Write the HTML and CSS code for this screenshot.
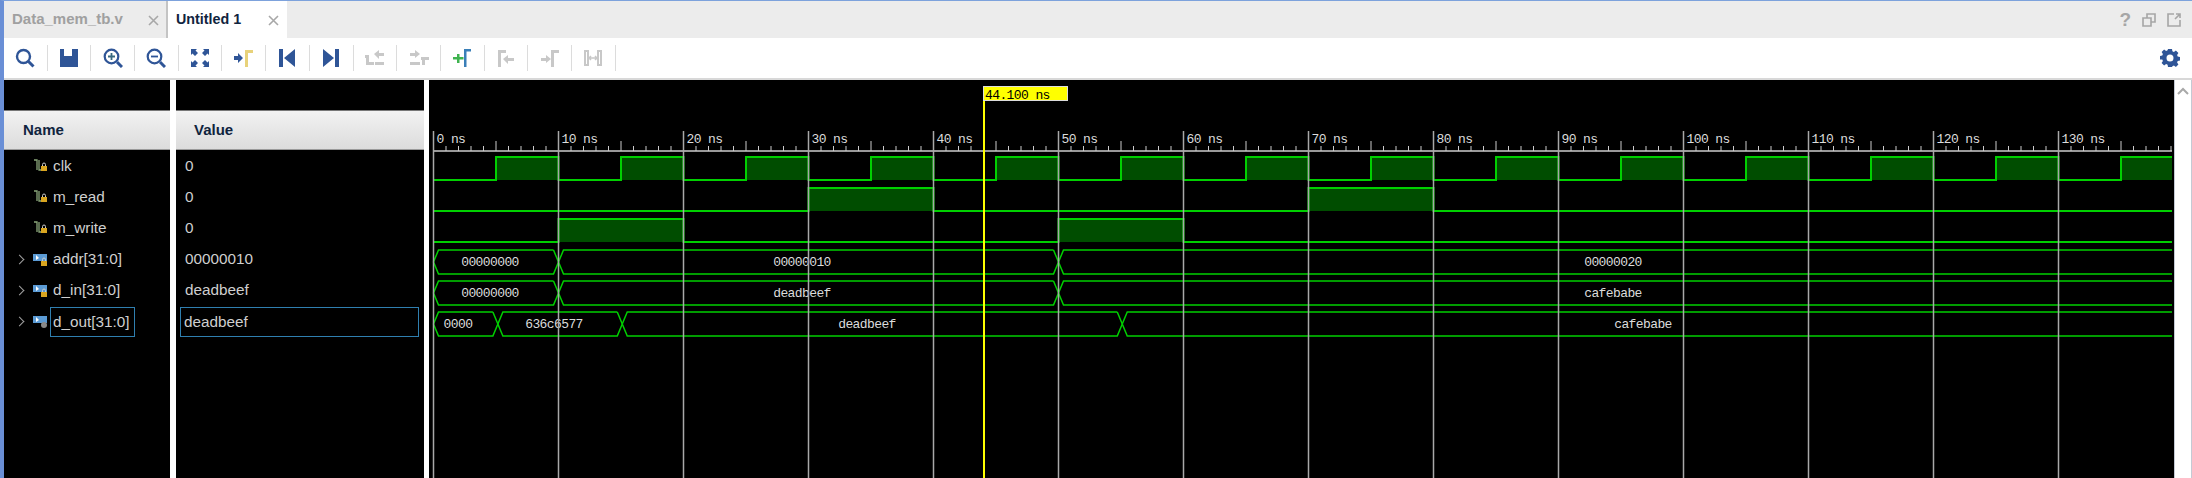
FILE: index.html
```html
<!DOCTYPE html>
<html lang="en">
<head>
    <meta charset="UTF-8">
    <title>Untitled 1</title>
    <link rel="stylesheet" href="styles.css">
</head>
<body>
    <div class="window">
        <div class="tabbar">
            <div class="tab">
                <span class="tab-name">Data_mem_tb.v</span>
                <svg class="tab-close" width="11" height="11" viewBox="0 0 11 11"><path d="M1 1l9 9M10 1l-9 9"/></svg>
            </div>
            <div class="tab tab-active">
                <span class="tab-name">Untitled 1</span>
                <svg class="tab-close" width="11" height="11" viewBox="0 0 11 11"><path d="M1 1l9 9M10 1l-9 9"/></svg>
            </div>
            <div class="tab-actions">
                <span class="help">?</span>
                <svg width="14" height="14" viewBox="0 0 14 14" fill="none" stroke="#a6a6a6" stroke-width="1.6"><path d="M1 5h8v8H1zM5 5V1h8v8H9"/></svg>
                <svg width="14" height="14" viewBox="0 0 14 14" fill="none" stroke="#a6a6a6" stroke-width="1.6"><path d="M7 1H1v12h12V7M8 6l5-5M9 1h4v4"/></svg>
            </div>
        </div>

        <div class="toolbar">
            <button class="tool"><svg width="20" height="20" viewBox="0 0 20 20" fill="none" stroke="#2f5597" stroke-width="2.4"><circle cx="8.5" cy="8.5" r="6.5"/><path d="M13.5 13.5l5 5" stroke-width="3"/></svg></button>
            <button class="tool"><svg width="20" height="20" viewBox="0 0 20 20"><path fill="#2f5597" fill-rule="evenodd" d="M1 1h18v18H1zM5 1v7h8V1z"/><path fill="#2f5597" d="M15 1h4v6h-4z"/></svg></button>
            <button class="tool"><svg width="20" height="20" viewBox="0 0 20 20" fill="none" stroke="#2f5597" stroke-width="2.2"><circle cx="8.5" cy="8.5" r="6.8"/><path d="M14 14l5 5" stroke-width="3"/><path d="M5 8.5h7M8.5 5v7" stroke="#3a6a80" stroke-width="1.8"/></svg></button>
            <button class="tool"><svg width="20" height="20" viewBox="0 0 20 20" fill="none" stroke="#2f5597" stroke-width="2.2"><circle cx="8.5" cy="8.5" r="6.8"/><path d="M14 14l5 5" stroke-width="3"/><path d="M5 8.5h7" stroke-width="1.8"/></svg></button>
            <button class="tool"><svg width="20" height="20" viewBox="0 0 20 20" fill="#2f5597"><path d="M1 1h6L5.5 2.5 8 5 5 8 2.5 5.5 1 7zM19 1v6l-1.5-1.5L15 8l-3-3 2.5-2.5L13 1zM1 19v-6l1.5 1.5L5 12l3 3-2.5 2.5L7 19zM19 19h-6l1.5-1.5L12 15l3-3 2.5 2.5L19 13z"/></svg></button>
            <button class="tool"><svg width="20" height="20" viewBox="0 0 20 20"><path fill="#2f5597" d="M0 8h4V5l5 5-5 5v-3H0z"/><path fill="#e8d27a" d="M11 2h8v3h-5v14h-3z"/></svg></button>
            <button class="tool"><svg width="20" height="20" viewBox="0 0 20 20" fill="#2f5597"><path d="M2 1h4v18H2zM18 1v18L7 10z"/></svg></button>
            <button class="tool"><svg width="20" height="20" viewBox="0 0 20 20" fill="#2f5597"><path d="M14 1h4v18h-4zM2 1v18l11-9z"/></svg></button>
            <button class="tool"><svg width="20" height="20" viewBox="0 0 20 20" fill="#c8c8c8"><path d="M0 7h4v7h5v3H1v-7H0zM9 6l5-4v3h5v3h-5v3zM10 14h9v3h-9z"/></svg></button>
            <button class="tool"><svg width="20" height="20" viewBox="0 0 20 20" fill="#c8c8c8"><path d="M1 5h5V2l5 4-5 4V8H1zM1 14h10v3H1zM12 9h8v3h-4v5h-3v-5h-1z"/></svg></button>
            <button class="tool"><svg width="20" height="20" viewBox="0 0 20 20"><path fill="#3fb34f" d="M1 9h4V6h2.500v3h4v2.500h-4v3.500H5v-3.500H1z"/><path fill="#3a7fb8" d="M12 1h7v2.500h-4.500V19H12z"/></svg></button>
            <button class="tool"><svg width="20" height="20" viewBox="0 0 20 20" fill="#c8c8c8"><path d="M2 2h8v3H5v14H2zM7 11l5-4v3h6v3h-6v3z"/></svg></button>
            <button class="tool"><svg width="20" height="20" viewBox="0 0 20 20" fill="#c8c8c8"><path d="M11 2h8v3h-5v14h-3zM1 10h5V7l5 4-5 4v-2H1z"/></svg></button>
            <button class="tool"><svg width="20" height="20" viewBox="0 0 20 20" fill="none" stroke="#c8c8c8"><path stroke-width="2" d="M2 3h3v14H2zM15 3h3v14h-3z"/><path stroke-width="1.5" d="M6 10h8M6 10l2-2M6 10l2 2M14 10l-2-2M14 10l-2 2"/></svg></button>
            <svg class="gear" width="18" height="18" viewBox="0 0 18 18"><path fill="#2f5597" fill-rule="evenodd" d="M7 0h4l.4 2.3 1.500.6L14.900 1.600l2.500 2.500-1.300 2 .6 1.500 2.300.4v3.500l-2.300.4-.6 1.500 1.300 2-2.500 2.500-2-1.300-1.500.6L11 18H7l-.4-2.300-1.500-.6-2 1.300-2.500-2.500 1.300-2-.6-1.500L-1 10.500V7l2.300-.4.6-1.500-1.300-2 2.500-2.500 2 1.300 1.500-.6zM9 5.500a3.500 3.500 0 1 0 0 7 3.500 3.500 0 0 0 0-7z"/></svg>
        </div>

        <div class="viewer">
            <div class="names">
                <div class="pane-top"></div>
                <div class="col-head col-head-name">Name</div>
                <div class="signal"><svg class="sig-icon" width="15" height="15" viewBox="0 0 15 15"><use href="#icon-bit"/></svg>clk</div>
                <div class="signal"><svg class="sig-icon" width="15" height="15" viewBox="0 0 15 15"><use href="#icon-bit"/></svg>m_read</div>
                <div class="signal"><svg class="sig-icon" width="15" height="15" viewBox="0 0 15 15"><use href="#icon-bit"/></svg>m_write</div>
                <div class="signal"><span class="chev"></span><svg class="sig-icon" width="15" height="15" viewBox="0 0 15 15"><use href="#icon-bus"/></svg>addr[31:0]</div>
                <div class="signal"><span class="chev"></span><svg class="sig-icon" width="15" height="15" viewBox="0 0 15 15"><use href="#icon-bus"/></svg>d_in[31:0]</div>
                <div class="signal"><span class="chev"></span><svg class="sig-icon" width="15" height="15" viewBox="0 0 15 15"><use href="#icon-bus-out"/></svg><span class="picked">d_out[31:0]</span></div>
            </div>
            <div class="values">
                <div class="pane-top"></div>
                <div class="col-head col-head-value">Value</div>
                <div class="value">0</div>
                <div class="value">0</div>
                <div class="value">0</div>
                <div class="value">00000010</div>
                <div class="value">deadbeef</div>
                <div class="value"><span class="picked picked-wide">deadbeef</span></div>
            </div>
            <div class="wave-pane">
                <svg id="wave" class="wave" width="1745" height="398"></svg>
            </div>
            <div class="scrollbar">
                <svg width="12" height="8" viewBox="0 0 12 8" fill="none" stroke="#a8a8a8" stroke-width="2"><path d="M1 7l5-5 5 5"/></svg>
            </div>
        </div>
    </div>

    <svg class="defs" width="0" height="0">
        <defs>
            <g id="icon-bit">
                <path d="M1 2h3v10M6 2v10h2" fill="none" stroke="#8aa67a" stroke-width="1.3"/>
                <rect x="8" y="8" width="6" height="5" fill="#d9a520"/>
                <path d="M9.5 8V6.500a1.500 1.500 0 0 1 3 0V8" fill="none" stroke="#cccccc"/>
            </g>
            <g id="icon-bus">
                <path d="M0 2h14v7H0z" fill="#5b9bd5"/>
                <path d="M3 3l3 3-3 2z" fill="#ffffff"/>
                <rect x="8" y="9" width="6" height="5" fill="#d9a520"/>
                <path d="M9.5 9V7.500a1.500 1.500 0 0 1 3 0V9" fill="none" stroke="#cccccc"/>
            </g>
            <g id="icon-bus-out">
                <path d="M0 2h14v7H0z" fill="#5b9bd5"/>
                <path d="M3 3l3 3-3 2z" fill="#ffffff"/>
                <circle cx="11" cy="11" r="3" fill="#8a8a8a"/>
            </g>
        </defs>
    </svg>

    <script src="wave.js"></script>
</body>
</html>
```

FILE: styles.css
```css
html, body {
    margin: 0;
    padding: 0;
    background-color: #ffffff;
    overflow: hidden;
}

body {
    font-family: "Liberation Sans", Arial, sans-serif;
    font-size: 15.3px;
}

.defs {
    position: absolute;
}

.window {
    height: 477px;
    border-top: 1px solid #7da2dc;
    border-left: 4px solid #6a8fd6;
    display: flex;
    flex-direction: column;
}

/* tabs */
.tabbar {
    display: flex;
    height: 37px;
    background-color: #ececec;
}

.tab {
    display: flex;
    align-items: center;
    justify-content: space-between;
    box-sizing: border-box;
    width: 164px;
    padding: 0 7px 2px 8px;
    border-right: 2px solid #c4c4c4;
    color: #a0a0a0;
    font-weight: bold;
    font-size: 15px;
}

.tab-active {
    width: 119px;
    background-color: #ffffff;
    border-right: none;
    color: #10243e;
    font-size: 14.3px;
    padding: 0 8px 2px 8px;
}

.tab-close {
    fill: none;
    stroke: #a8a8a8;
    stroke-width: 1.6;
    margin-top: 4px;
}

.tab-actions {
    margin-left: auto;
    display: flex;
    align-items: center;
    gap: 11px;
    padding: 0 11px 0 0;
}

.help {
    color: #a6a6a6;
    font-weight: bold;
    font-size: 19px;
}

/* toolbar */
.toolbar {
    display: flex;
    align-items: center;
    height: 40px;
    background-color: #ffffff;
}

.tool {
    display: flex;
    align-items: center;
    justify-content: center;
    box-sizing: border-box;
    width: 43.7px;
    height: 26px;
    padding: 0;
    background: none;
    border: none;
    border-right: 1px solid #dcdcdc;
}

.gear {
    margin-left: auto;
    margin-right: 13px;
    overflow: visible;
}

/* signal panes */
.viewer {
    display: flex;
    flex: 1;
    min-height: 0;
    border-top: 2px solid #d8d8d8;
    background-color: #ffffff;
}

.names {
    width: 166px;
    background-color: #000000;
    margin-right: 6px;
}

.values {
    width: 248px;
    background-color: #000000;
    margin-right: 5px;
}

.pane-top {
    height: 30px;
    border-bottom: 1px solid #777777;
}

.col-head {
    display: flex;
    align-items: center;
    box-sizing: border-box;
    height: 39px;
    padding-bottom: 2px;
    background: linear-gradient(#f2f2f2, #dcdcdc);
    border-bottom: 1px solid #9a9a9a;
    color: #10243e;
    font-weight: bold;
    font-size: 15px;
}

.col-head-name {
    padding-left: 19px;
}

.col-head-value {
    padding-left: 18px;
}

.signal, .value {
    display: flex;
    align-items: center;
    height: 31.2px;
    color: #cfcfcf;
}

.signal {
    padding-left: 29px;
    position: relative;
}

.value {
    padding-left: 9px;
}

.chev {
    position: absolute;
    left: 12px;
    top: 12px;
    width: 6px;
    height: 6px;
    border-top: 1px solid #a0a0a0;
    border-right: 1px solid #a0a0a0;
    transform: rotate(45deg);
}

.sig-icon {
    margin-right: 5px;
}

.picked {
    display: flex;
    align-items: center;
    height: 28px;
    margin-left: -3px;
    padding: 0 4px 0 2px;
    border: 1px solid #2f7fb0;
}

.picked-wide {
    box-sizing: content-box;
    width: 231px;
    margin-left: -5px;
    padding: 0 3px;
}

/* waveform */
.wave-pane {
    width: 1745px;
    background-color: #000000;
}

.wave {
    display: block;
}

.wave-text {
    font-family: "Liberation Mono", "Courier New", monospace;
    font-size: 13px;
    letter-spacing: -0.6px;
    fill: #dcdcdc;
}

.wave-mid {
    text-anchor: middle;
}

.cursor-text {
    fill: #000000;
}

.scrollbar {
    flex: 1;
    display: flex;
    justify-content: center;
    align-items: flex-start;
    padding-top: 7px;
    border-left: 1px solid #c4cad4;
    border-right: 1px solid #c4cad4;
}
```

FILE: wave.js
```js
// Pane starts at x=429, y=80 in the window; all numbers below are pane coordinates
var NS = 'http://www.w3.org/2000/svg';
var wave = document.getElementById('wave');
var X0 = 4.5;          // where 0 ns sits
var PER_NS = 12.5;
var END = 1743;
var GREEN = '#00d000';
var FILL = '#004d00';
var SLANT = 5;

function nsToX(ns) {
    return X0 + ns * PER_NS;
}

function add(tag, attrs, text) {
    var el = document.createElementNS(NS, tag);
    for (var k in attrs) {
        el.setAttribute(k, attrs[k]);
    }
    if (text) {
        el.textContent = text;
    }
    wave.appendChild(el);
    return el;
}

function line(x1, y1, x2, y2, color, width) {
    add('line', { x1: x1, y1: y1, x2: x2, y2: y2, stroke: color, 'stroke-width': width || 1 });
}

// Digital signal, highs is a list of [from, to] in ns
function drawBit(yHigh, yLow, highs) {
    var d = 'M' + nsToX(0) + ' ' + yLow;
    highs.forEach(function(h) {
        var x1 = nsToX(h[0]);
        var x2 = Math.min(nsToX(h[1]), END);
        add('rect', { x: x1, y: yHigh, width: x2 - x1, height: yLow - yHigh, fill: FILL });
        d += 'L' + x1 + ' ' + yLow + 'L' + x1 + ' ' + yHigh + 'L' + x2 + ' ' + yHigh;
        if (x2 < END) {
            d += 'L' + x2 + ' ' + yLow;
        }
    });
    if (nsToX(highs[highs.length - 1][1]) < END) {
        d += 'L' + END + ' ' + yLow;
    }
    add('path', { d: d, fill: 'none', stroke: GREEN, 'stroke-width': 2 });
}

// Bus signal, segs is a list of [from ns, text, text centre x]
function drawBus(yTop, yBottom, segs) {
    var yMid = (yTop + yBottom) / 2;
    segs.forEach(function(s, i) {
        var start = nsToX(s[0]);
        var last = i === segs.length - 1;
        var stop = last ? END : nsToX(segs[i + 1][0]);
        var flatEnd = last ? END : stop - SLANT;
        var d = 'M' + flatEnd + ' ' + yTop + 'L' + (start + SLANT) + ' ' + yTop + 'L' + start + ' ' + yMid +
            'L' + (start + SLANT) + ' ' + yBottom + 'L' + flatEnd + ' ' + yBottom;
        if (!last) {
            d += 'L' + stop + ' ' + yMid + 'L' + flatEnd + ' ' + yTop;
        }
        add('path', { d: d, fill: 'none', stroke: GREEN, 'stroke-width': 1.5 });
        add('text', { x: s[2], y: yMid + 4, class: 'wave-text wave-mid' }, s[1]);
    });
}

// clock runs 5 ns low, 5 ns high
var clk = [];
for (var t = 5; t < 140; t += 10) {
    clk.push([t, t + 5]);
}
drawBit(77, 100, clk);
drawBit(108, 131, [[30, 40], [70, 80]]);
drawBit(139, 162, [[10, 20], [50, 60]]);

drawBus(170, 194, [[0, '00000000', 61], [10, '00000010', 373], [50, '00000020', 1184]]);
drawBus(201, 225, [[0, '00000000', 61], [10, 'deadbeef', 373], [50, 'cafebabe', 1184]]);
drawBus(232, 256, [[0, '0000', 29], [5.15, '636c6577', 125], [15.1, 'deadbeef', 438], [55.1, 'cafebabe', 1214]]);

// ruler and the grid lines
var rulerY = 71;
line(X0, rulerY, END, rulerY, '#cccccc', 1.5);
for (var ns = 0; nsToX(ns) <= END; ns++) {
    var x = nsToX(ns);
    if (ns % 10 === 0) {
        line(x, 51, x, 398, '#a8a8a8', 1.5);
        add('text', { x: x + 3, y: 63, class: 'wave-text' }, ns + ' ns');
    } else {
        line(x, ns % 5 === 0 ? 61 : 66, x, rulerY, '#cccccc');
    }
}

// time cursor
line(555, 20, 555, 398, '#ffff00', 2);
add('rect', { x: 554.5, y: 6.5, width: 84, height: 14, fill: '#ffff00', stroke: '#dddddd' });
add('text', { x: 556, y: 18.5, class: 'wave-text cursor-text' }, '44.100 ns');
```
